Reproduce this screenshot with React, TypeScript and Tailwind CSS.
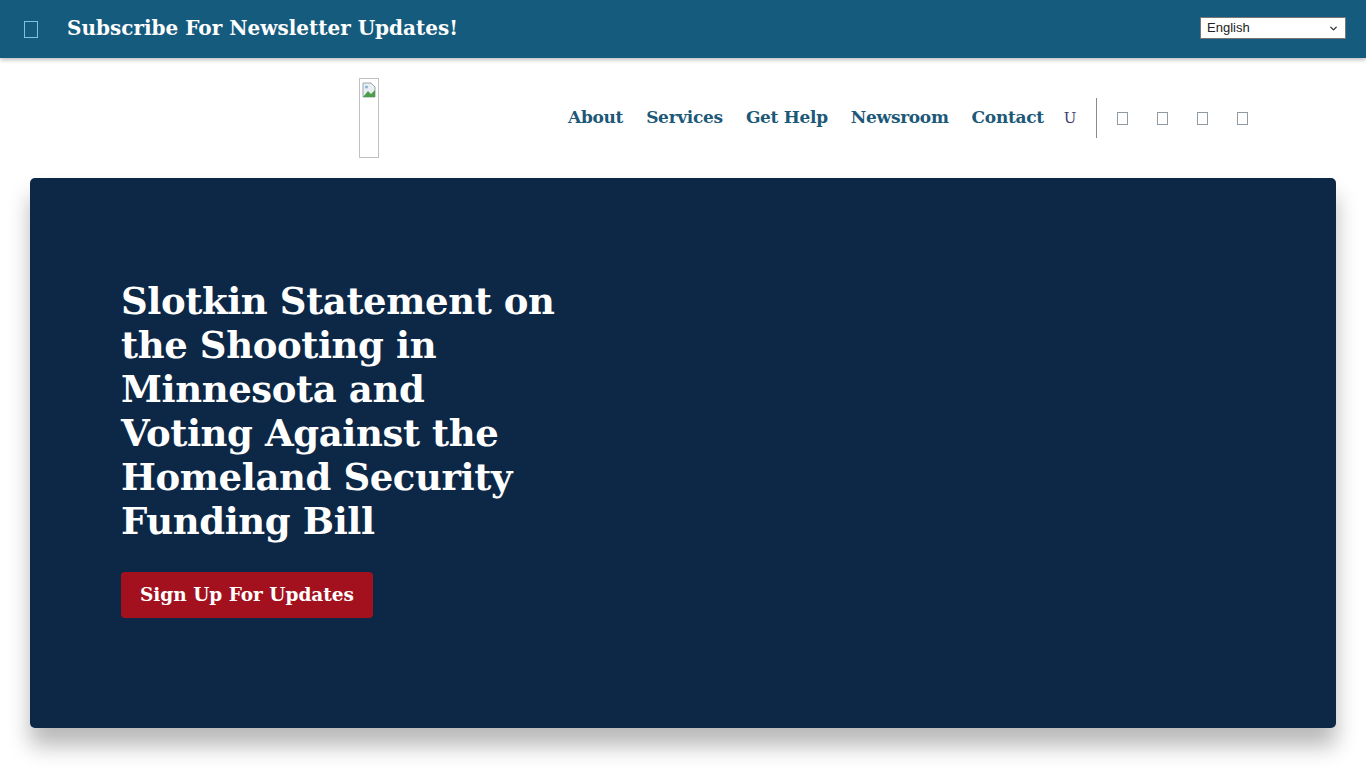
import { ChevronDown } from "lucide-react";

const serif = "font-['DejaVu_Serif',Georgia,serif]";

const navLinks = ["About", "Services", "Get Help", "Newsroom", "Contact"];

function MissingGlyph({ className }: { className: string }) {
  return <span className={`inline-block border ${className}`} />;
}

export default function App() {
  return (
    <div className="min-h-screen bg-white">
      {/* Newsletter bar */}
      <div className="h-[58px] bg-[#155b7e] flex items-center px-[24px] shadow-[0_2px_4px_rgba(0,0,0,0.25)] relative z-10">
        <MissingGlyph className="w-[14px] h-[17px] border-[#7cc3df]" />
        <h2 className={`${serif} ml-[29px] mb-[2px] text-white text-[20px] font-bold`}>
          Subscribe For Newsletter Updates!
        </h2>
        <div className="ml-auto mr-[-4px] mb-[2px] w-[146px] h-[22px] bg-white border border-[#767676] flex items-center px-[6px] font-['Liberation_Sans',Arial,sans-serif] text-[13px] text-[#222]">
          <span>English</span>
          <ChevronDown className="ml-auto w-[11px] h-[11px] text-[#333]" strokeWidth={3} />
        </div>
      </div>

      {/* Header */}
      <div className="h-[120px] flex items-center">
        <div className="ml-[359px] w-[20px] h-[80px] border border-[#c0c0c0] flex justify-center items-start pt-[3px]">
          <svg width="14" height="16" viewBox="0 0 14 16">
            <path d="M1 1h8l4 4v10H1z" fill="#e9eef2" stroke="#9aa5ae" strokeWidth="1" />
            <path d="M1 15l5-6 3 3 4-4v7z" fill="#4c9e4a" />
            <circle cx="4.5" cy="5" r="1.6" fill="#8fb6d8" />
          </svg>
        </div>
        <nav className={`${serif} ml-[189px] flex items-center gap-[23px] text-[17px] font-bold text-[#1c5877] tracking-[-0.3px]`}>
          {navLinks.map((l) => (
            <a key={l} href="#">{l}</a>
          ))}
        </nav>
        <span className={`${serif} ml-[20px] text-[15px] text-[#3d3b6e]`}>U</span>
        <div className="ml-[20px] w-px h-[40px] bg-[#8a8a8a]" />
        <div className="ml-[20px] flex items-center gap-[29px]">
          {[0, 1, 2, 3].map((i) => (
            <MissingGlyph key={i} className="w-[11px] h-[13px] border-[#8f9aa2]" />
          ))}
        </div>
      </div>

      {/* Hero */}
      <div className="px-[30px]">
        <div className="h-[550px] bg-[#0c2846] rounded-[5px] shadow-[0_18px_22px_rgba(0,0,0,0.28)] flex flex-col justify-center pl-[91px] pb-[10px]">
          <h1 className={`${serif} text-white font-bold text-[37px] leading-[44px] tracking-[-0.4px] w-[480px]`}>
            Slotkin Statement on<br />
            the Shooting in<br />
            Minnesota and<br />
            Voting Against the<br />
            Homeland Security<br />
            Funding Bill
          </h1>
          <button className={`${serif} mt-[29px] w-[252px] h-[46px] rounded-[4px] bg-[#a3111e] text-white font-bold text-[18.5px]`}>
            Sign Up For Updates
          </button>
        </div>
      </div>
    </div>
  );
}
